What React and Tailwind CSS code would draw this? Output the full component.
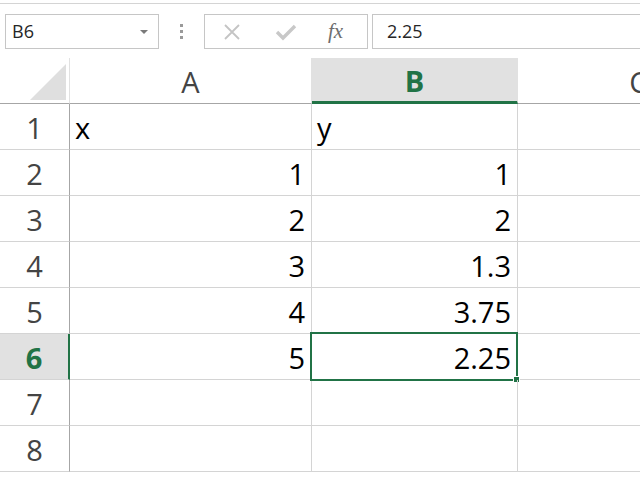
import React from 'react';

const font = { fontFamily: '"Open Sans", "Noto Sans", sans-serif' };

const rows = [
    ['x', 'y'],
    ['1', '1'],
    ['2', '2'],
    ['3', '1.3'],
    ['4', '3.75'],
    ['5', '2.25'],
    ['', ''],
    ['', ''],
];

const cols = ['A', 'B', 'C'];

const FormulaBar = () => (
    <div className="h-[55px] flex items-start pt-[10px] border-t border-[#d4d4d4] mt-[3px]">
        {/* Name box */}
        <div className="ml-[5px] w-[154px] h-[35px] border border-[#c6c6c6] flex items-center justify-between pl-[6px] pr-[10px]">
            <span className="text-[18px] text-[#262626]">B6</span>
            <span className="w-0 h-0 border-l-[4px] border-r-[4px] border-t-[4px] border-l-transparent border-r-transparent border-t-[#7a7a7a]" />
        </div>

        {/* Grip dots */}
        <div className="w-[45px] h-[35px] flex flex-col items-center justify-center gap-[3px]">
            <span className="w-[3px] h-[3px] bg-[#9a9a9a]" />
            <span className="w-[3px] h-[3px] bg-[#9a9a9a]" />
            <span className="w-[3px] h-[3px] bg-[#9a9a9a]" />
        </div>

        {/* Cancel / enter / fx */}
        <div className="w-[164px] h-[35px] border border-[#c6c6c6] flex items-center">
            <svg width="18" height="18" viewBox="0 0 18 18" className="ml-[18px]">
                <path d="M2 2 L16 16 M16 2 L2 16" stroke="#c4c4c4" strokeWidth="1.8" fill="none" />
            </svg>
            <svg width="22" height="18" viewBox="0 0 22 18" className="ml-[34px]">
                <path d="M2 9 L8 15 L20 3" stroke="#c8c8c8" strokeWidth="3.4" fill="none" />
            </svg>
            <span className="ml-[31px] text-[21px] italic text-[#6e6e6e]" style={{ fontFamily: '"Liberation Serif", serif' }}>
                fx
            </span>
        </div>

        {/* Formula input */}
        <div className="ml-[4px] flex-1 h-[35px] border-t border-b border-l border-[#c6c6c6] flex items-center pl-[14px]">
            <span className="text-[18px] text-[#262626]">2.25</span>
        </div>
    </div>
);

export default function App() {
    return (
        <div className="w-[640px] h-[480px] overflow-hidden bg-white" style={font}>
            <FormulaBar />

            <div className="grid grid-cols-[70px_242px_206px_242px]">
                {/* Corner */}
                <div className="h-[46px] border-r border-b border-r-[#e1e1e1] border-b-[#a6a6a6] flex items-end justify-end pr-[3px] pb-[3px]">
                    <svg width="36" height="36" viewBox="0 0 36 36">
                        <polygon points="36,0 36,36 0,36" fill="#dfdfdf" />
                    </svg>
                </div>
                {cols.map((c) => {
                    const active = c === 'B';
                    return (
                        <div
                            key={c}
                            className={`h-[46px] border-r border-r-[#e1e1e1] flex items-center justify-center text-[29px] ${active
                                ? 'bg-[#e1e1e1] border-b-[3px] border-b-[#217346] text-[#217346] font-bold'
                                : 'border-b border-b-[#a6a6a6] text-[#444444]'
                                }`}
                        >
                            <span className="mt-[3px]">{c}</span>
                        </div>
                    );
                })}

                {rows.map((r, i) => {
                    const n = i + 1;
                    const active = n === 6;
                    return (
                        <React.Fragment key={n}>
                            <div
                                className={`h-[46px] border-b border-b-[#d4d4d4] flex items-center justify-center text-[29px] ${active
                                    ? 'bg-[#e1e1e1] border-r-2 border-r-[#217346] text-[#217346] font-bold'
                                    : 'border-r border-r-[#a6a6a6] text-[#444444]'
                                    }`}
                            >
                                <span className="mt-[2px]">{n}</span>
                            </div>
                            <div
                                className={`h-[46px] border-r border-b border-[#d4d4d4] flex items-center text-[29px] text-black ${n === 1 ? 'justify-start pl-[5px]' : 'justify-end pr-[6px]'}`}
                            >
                                <span className="mt-[2px]">{r[0]}</span>
                            </div>
                            <div
                                className={`relative h-[46px] border-r border-b border-[#d4d4d4] flex items-center text-[29px] text-black ${n === 1 ? 'justify-start pl-[5px]' : 'justify-end pr-[6px]'}`}
                            >
                                <span className="mt-[2px]">{r[1]}</span>
                                {active && (
                                    <>
                                        <div className="absolute -top-[2px] -left-[2px] -right-[1px] -bottom-[2px] border-2 border-[#217346]" />
                                        <div className="absolute -right-[3px] -bottom-[4px] w-[7px] h-[7px] bg-[#217346] border border-white" />
                                    </>
                                )}
                            </div>
                            <div className="h-[46px] border-b border-[#d4d4d4]" />
                        </React.Fragment>
                    );
                })}
            </div>
        </div>
    );
}
